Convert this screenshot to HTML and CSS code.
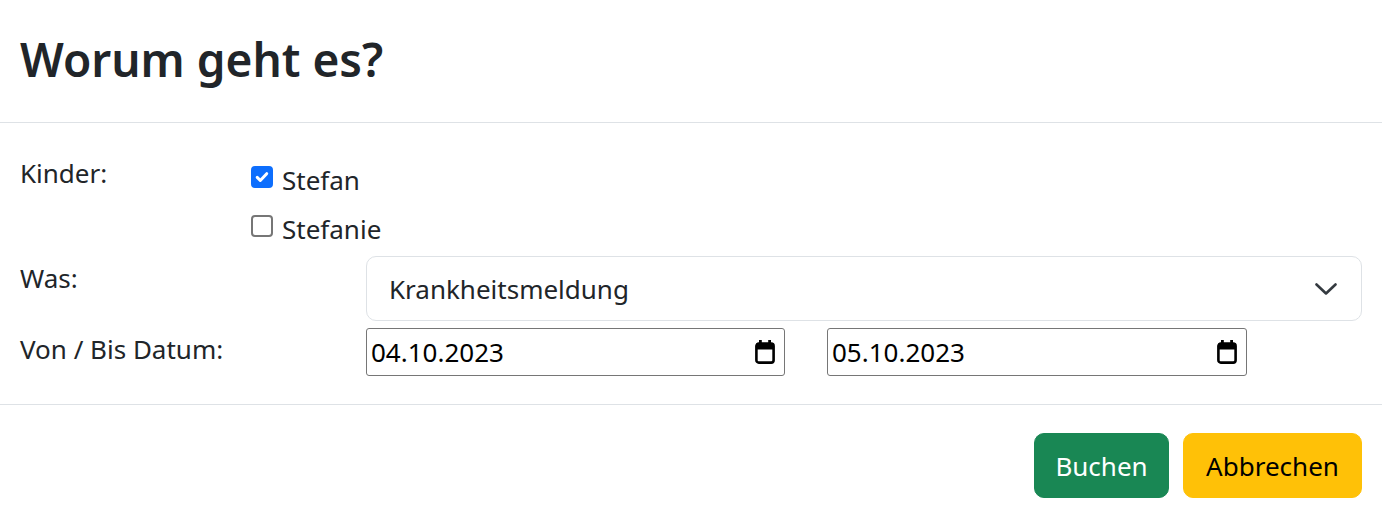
FILE: index.html
```html
<!DOCTYPE html>
<html lang="de">
<head>
<meta charset="utf-8">
<title>Worum geht es?</title>
<link rel="stylesheet" href="styles.css">
</head>
<body>
<div class="modal">
  <header class="modal-header">
    <h3 class="modal-title">Worum geht es?</h3>
  </header>
  <section class="modal-body">
    <div class="row row-kinder">
      <div class="label">Kinder:</div>
      <div class="checks">
        <label class="check">
          <span class="box checked">
            <svg viewBox="0 0 16 16" width="16" height="16"><path d="M3.2 8.4l3.1 3.1 6.4-6.8" fill="none" stroke="#fff" stroke-width="3" stroke-linecap="round" stroke-linejoin="round"/></svg>
          </span>
          <span class="check-text">Stefan</span>
        </label>
        <label class="check">
          <span class="box"></span>
          <span class="check-text">Stefanie</span>
        </label>
      </div>
    </div>
    <div class="row row-was">
      <div class="label label-was">Was:</div>
      <div class="select">
        <span class="select-text">Krankheitsmeldung</span>
        <svg class="chevron" viewBox="0 0 24 12" width="24" height="12"><path d="M2.5 1.5l9.5 9 9.5-9" fill="none" stroke="#343a40" stroke-width="2.6" stroke-linecap="round" stroke-linejoin="round"/></svg>
      </div>
    </div>
    <div class="row row-datum">
      <div class="label label-datum">Von / Bis Datum:</div>
      <div class="dates">
        <div class="date">
          <span class="date-text">04.10.2023</span>
          <svg class="cal" viewBox="0 0 20 24" width="20" height="24"><rect x="1.4" y="3.6" width="17.2" height="19" rx="2.4" fill="none" stroke="#000" stroke-width="2.6"/><rect x="1" y="3.5" width="18" height="6" fill="#000"/><rect x="4" y="0" width="2.8" height="5" fill="#000"/><rect x="13.2" y="0" width="2.8" height="5" fill="#000"/></svg>
        </div>
        <div class="date">
          <span class="date-text">05.10.2023</span>
          <svg class="cal" viewBox="0 0 20 24" width="20" height="24"><rect x="1.4" y="3.6" width="17.2" height="19" rx="2.4" fill="none" stroke="#000" stroke-width="2.6"/><rect x="1" y="3.5" width="18" height="6" fill="#000"/><rect x="4" y="0" width="2.8" height="5" fill="#000"/><rect x="13.2" y="0" width="2.8" height="5" fill="#000"/></svg>
        </div>
      </div>
    </div>
  </section>
  <footer class="modal-footer">
    <button class="btn btn-success" type="button">Buchen</button>
    <button class="btn btn-warning" type="button">Abbrechen</button>
  </footer>
</div>
</body>
</html>
```
FILE: styles.css
```css
html, body {
  margin: 0;
  padding: 0;
  background: #fff;
}
body {
  font-family: "Noto Sans", "Open Sans", sans-serif;
  font-size: 26px;
  color: #212529;
}
.modal {
  width: 1382px;
}
.modal-header {
  border-bottom: 1px solid #dee2e6;
  padding: 0 20px;
  box-sizing: border-box;
  height: 123px;
  display: flex;
  align-items: flex-start;
}
.modal-title {
  margin: 32px 0 0;
  font-size: 46px;
  font-weight: 600;
  line-height: 1.2;
  color: #212529;
}
.modal-body {
  padding: 29px 20px 28px;
}
.row {
  display: grid;
}
.row-kinder {
  grid-template-columns: 231px 1fr;
}
.row-was {
  grid-template-columns: 346px 1fr;
  margin-top: 6px;
}
.row-datum {
  grid-template-columns: 346px 1fr;
  margin-top: 7px;
}
.label {
  line-height: 42px;
}
.label-was {
  padding-top: 1px;
}
.label-datum {
  margin-top: 0;
}
.checks {
  display: flex;
  flex-direction: column;
}
.check {
  display: flex;
  align-items: center;
  height: 49px;
  gap: 9px;
}
.box {
  width: 18px;
  height: 18px;
  border: 2px solid #767676;
  border-radius: 4px;
  display: flex;
  align-items: center;
  justify-content: center;
  margin-top: 1px;
}
.box.checked {
  background: #0d6efd;
  border-color: #0d6efd;
}
.check-text {
  position: relative;
  top: 3px;
}
.select {
  height: 65px;
  box-sizing: border-box;
  border: 1px solid #dee2e6;
  border-radius: 10px;
  display: flex;
  align-items: center;
  justify-content: space-between;
  padding: 0 23px 0 22px;
}
.dates {
  display: flex;
  gap: 42px;
}
.date {
  width: 419px;
  height: 48px;
  box-sizing: border-box;
  border: 1px solid #767676;
  border-radius: 3px;
  display: flex;
  align-items: center;
  justify-content: space-between;
  padding: 0 9px 0 4px;
  color: #000;
}
.date + .date {
  width: 420px;
}
.modal-footer {
  border-top: 1px solid #dee2e6;
  padding: 28px 20px 14px;
  display: flex;
  justify-content: flex-end;
  gap: 14px;
}
.btn {
  font-family: inherit;
  font-size: 26px;
  height: 65px;
  border-radius: 10px;
  border: 1px solid transparent;
  padding: 0 20px;
  cursor: pointer;
}
.btn-success {
  background: #198754;
  border-color: #198754;
  color: #fff;
  width: 135px;
}
.btn-warning {
  background: #ffc107;
  border-color: #ffc107;
  color: #000;
  width: 179px;
}
```
